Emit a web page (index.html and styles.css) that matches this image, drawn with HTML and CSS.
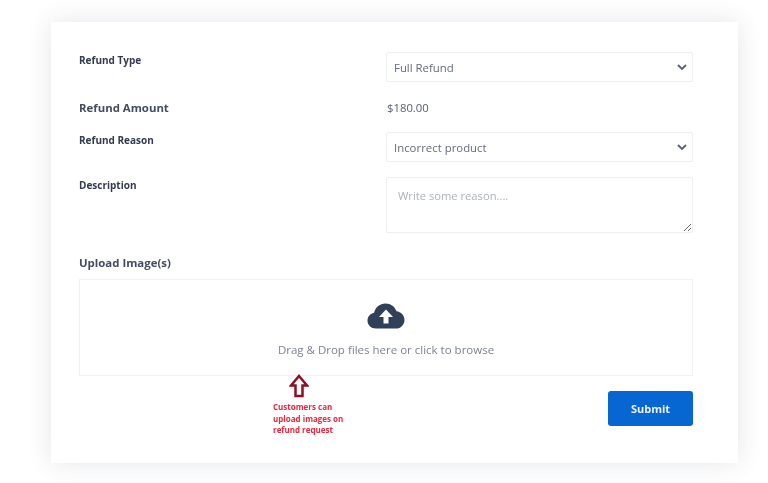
FILE: index.html
```html
<!DOCTYPE html>
<html lang="en">
  <head>
    <meta charset="UTF-8" />
    <meta name="viewport" content="width=device-width, initial-scale=1.0" />
    <title>Refund Request</title>
    <link rel="stylesheet" href="styles.css">
  </head>
  <body>
    <form class="card">
      <div class="row row--type">
        <label class="label">Refund Type</label>
        <div class="select-wrap">
          <select class="field">
            <option>Full Refund</option>
          </select>
          <svg class="chevron" viewBox="0 0 12 8"><path d="M2 2 6 6l4-4" /></svg>
        </div>
      </div>

      <div class="row row--amount">
        <span class="label label--large">Refund Amount</span>
        <span class="amount">$180.00</span>
      </div>

      <div class="row row--reason">
        <label class="label">Refund Reason</label>
        <div class="select-wrap">
          <select class="field">
            <option>Incorrect product</option>
          </select>
          <svg class="chevron" viewBox="0 0 12 8"><path d="M2 2 6 6l4-4" /></svg>
        </div>
      </div>

      <div class="row row--description">
        <label class="label">Description</label>
        <textarea class="field field--area" placeholder="Write some reason...."></textarea>
      </div>

      <div class="upload-title label label--large">Upload Image(s)</div>
      <div class="dropzone">
        <svg class="cloud" viewBox="0 0 38 26">
          <path class="cloud__body" d="M9 25.5C4 25.5.5 22 .5 17.5c0-4 2.8-7 6.6-7.8C8.4 4.200 13 .5 18.500.5c5.200 0 9.500 3.200 11 7.800 4.400.5 8 4 8 8.600 0 4.800-3.800 8.600-8.600 8.600Z" />
          <path class="cloud__arrow" d="M19 6.500 26 14h-4.500v6.500h-5V14H12Z" />
        </svg>
        <div class="dropzone__text">Drag &amp; Drop files here or click to browse</div>
      </div>

      <div class="footer">
        <div class="note">
          <svg class="note__arrow" viewBox="0 0 20 24"><path d="M10 2 18 11.500h-4.500V22h-7V11.500H2Z" /></svg>
          <p class="note__text">Customers can<br>upload images on<br>refund request</p>
        </div>
        <button class="submit" type="button">Submit</button>
      </div>
    </form>
  </body>
</html>
```

FILE: styles.css
```css
body {
  font-family: "Open Sans", sans-serif;
  margin: 0;
  padding: 22px 30px 20px 51px;
  background-color: #fff;
  color: #3a4256;
}

/* the whole card is slightly soft, like a scaled-up capture */
.card {
  height: 441px;
  box-sizing: border-box;
  padding: 30px 45px 0 28px;
  background-color: #fff;
  box-shadow: 0 0 24px rgba(40, 50, 70, 0.12);
  filter: blur(0.4px);
}

.row {
  display: grid;
  grid-template-columns: 307px 307px;
}

.row--amount {
  height: 34px;
  margin: 9px 0 7px;
  align-items: center;
}

.row--description {
  margin-top: 15px;
}

.label {
  padding-top: 1px;
  font-size: 10px;
  font-weight: 700;
  line-height: 14px;
  color: #333b4e;
}

.label--large {
  padding-top: 0;
  font-size: 11.4px;
  line-height: 16px;
  color: #454d63;
}

.amount {
  padding: 0 0 2px 1px;
  font-size: 11.3px;
  color: #596075;
}

.select-wrap {
  position: relative;
}

.field {
  display: block;
  width: 100%;
  height: 30px;
  box-sizing: border-box;
  padding: 1px 7px 0;
  border: 1px solid #eceef2;
  border-radius: 2px;
  background-color: #fff;
  font-family: "Open Sans", sans-serif;
  font-size: 11.4px;
  color: #656c7f;
  appearance: none;
}

.field--area {
  height: 56px;
  padding: 10px 11px;
  font-size: 11.2px;
  line-height: 16px;
  outline: none;
}

.field--area::placeholder {
  color: #adb2be;
}

.chevron {
  position: absolute;
  top: 11px;
  right: 5px;
  width: 12px;
  height: 8px;
  pointer-events: none;
}

.chevron path {
  fill: none;
  stroke: #596176;
  stroke-width: 1.8;
}

.upload-title {
  margin-top: 22px;
}

.dropzone {
  display: flex;
  flex-direction: column;
  align-items: center;
  height: 97px;
  box-sizing: border-box;
  margin-top: 8px;
  padding-top: 23px;
  border: 1px solid #f0f1f4;
}

.cloud {
  width: 38px;
  height: 26px;
}

.cloud__body {
  fill: #2f4058;
}

.cloud__arrow {
  fill: #fff;
}

.dropzone__text {
  margin-top: 13px;
  font-size: 11.5px;
  line-height: 16px;
  color: #7d8394;
}

.footer {
  display: flex;
  justify-content: space-between;
  align-items: flex-start;
}

.note {
  margin-left: 194px;
}

.note__arrow {
  display: block;
  width: 20px;
  height: 24px;
  margin-left: 16px;
  margin-top: -2px;
}

.note__arrow path {
  fill: #fff;
  stroke: #8e0f22;
  stroke-width: 2.5;
}

.note__text {
  margin: 3px 0 0;
  font-size: 8px;
  font-weight: 700;
  line-height: 11.5px;
  color: #f0253f;
}

.submit {
  width: 85px;
  height: 35px;
  margin-top: 15px;
  border: none;
  border-radius: 3px;
  background-color: #0767d2;
  color: #eaf2fc;
  font-family: "Open Sans", sans-serif;
  font-size: 11px;
  font-weight: 700;
  cursor: pointer;
}
```
